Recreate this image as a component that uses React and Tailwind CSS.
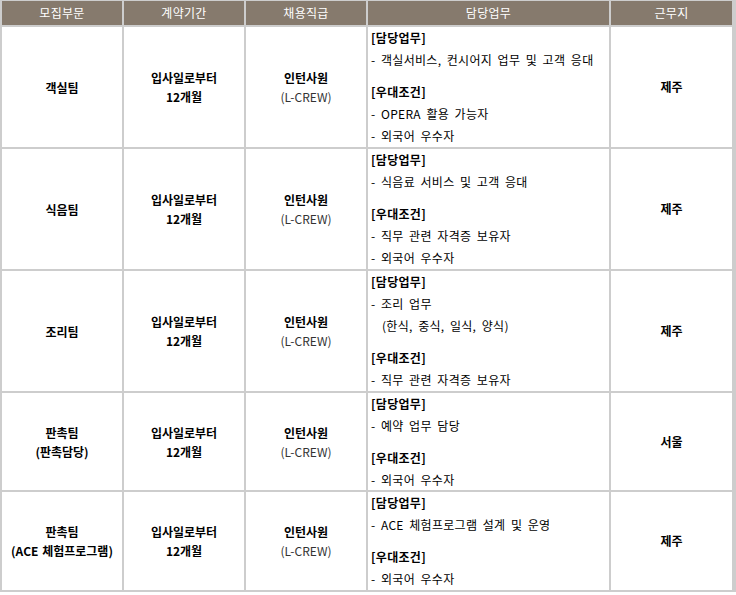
import React from "react";

const rows = [
  {
    team: ["객실팀"],
    loc: "제주",
    h: "h-[120px]",
    duty: ["- 객실서비스, 컨시어지 업무 및 고객 응대"],
    pref: ["- OPERA 활용 가능자", "- 외국어 우수자"],
  },
  {
    team: ["식음팀"],
    loc: "제주",
    h: "h-[120px]",
    duty: ["- 식음료 서비스 및 고객 응대"],
    pref: ["- 직무 관련 자격증 보유자", "- 외국어 우수자"],
  },
  {
    team: ["조리팀"],
    loc: "제주",
    h: "h-[120px]",
    duty: ["- 조리 업무", "\u00a0\u00a0(한식, 중식, 일식, 양식)"],
    pref: ["- 직무 관련 자격증 보유자"],
  },
  {
    team: ["판촉팀", "(판촉담당)"],
    loc: "서울",
    h: "h-[97px]",
    duty: ["- 예약 업무 담당"],
    pref: ["- 외국어 우수자"],
  },
  {
    team: ["판촉팀", "(ACE 체험프로그램)"],
    loc: "제주",
    h: "h-[98px]",
    duty: ["- ACE 체험프로그램 설계 및 운영"],
    pref: ["- 외국어 우수자"],
  },
];

const headers = ["모집부문", "계약기간", "채용직급", "담당업무", "근무지"];

export default function App() {
  return (
    <div
      className="w-[736px] h-[595px] bg-white text-[12px] text-black"
      style={{ fontFamily: '"Noto Sans CJK KR", "Noto Sans", sans-serif' }}
    >
      <div className="grid grid-cols-[120px_120px_120px_241px_121px] gap-[2px] bg-[#cdcdcd] pt-[1px] pl-[2px] pr-[4px] pb-[2px]">
        {headers.map((h) => (
          <div
            key={h}
            className="h-[24px] bg-[#867a6d] text-white flex items-center justify-center leading-[24px] tracking-[0.3px]"
          >
            {h}
          </div>
        ))}
        {rows.map((r, i) => (
          <React.Fragment key={i}>
            <div className={`${r.h} bg-white flex flex-col items-center justify-center font-bold leading-[19px] [word-spacing:1px]`}>
              {r.team.map((t) => (
                <div key={t}>{t}</div>
              ))}
            </div>
            <div className={`${r.h} bg-white flex flex-col items-center justify-center font-bold leading-[19px]`}>
              <div>입사일로부터</div>
              <div>12개월</div>
            </div>
            <div className={`${r.h} bg-white flex flex-col items-center justify-center leading-[19px]`}>
              <div className="font-bold">인턴사원</div>
              <div className="text-[#333333]">(L-CREW)</div>
            </div>
            <div className={`${r.h} bg-white flex flex-col pl-[3px] leading-[22px] overflow-hidden tracking-[0.3px] [word-spacing:2.5px]`}>
              <div className="font-bold">[담당업무]</div>
              {r.duty.map((d) => (
                <div key={d} className="whitespace-pre">{d}</div>
              ))}
              <div className="h-[10px] shrink-0" />
              <div className="font-bold">[우대조건]</div>
              {r.pref.map((d) => (
                <div key={d}>{d}</div>
              ))}
            </div>
            <div className={`${r.h} bg-white flex items-center justify-center font-bold`}>
              {r.loc}
            </div>
          </React.Fragment>
        ))}
      </div>
    </div>
  );
}
